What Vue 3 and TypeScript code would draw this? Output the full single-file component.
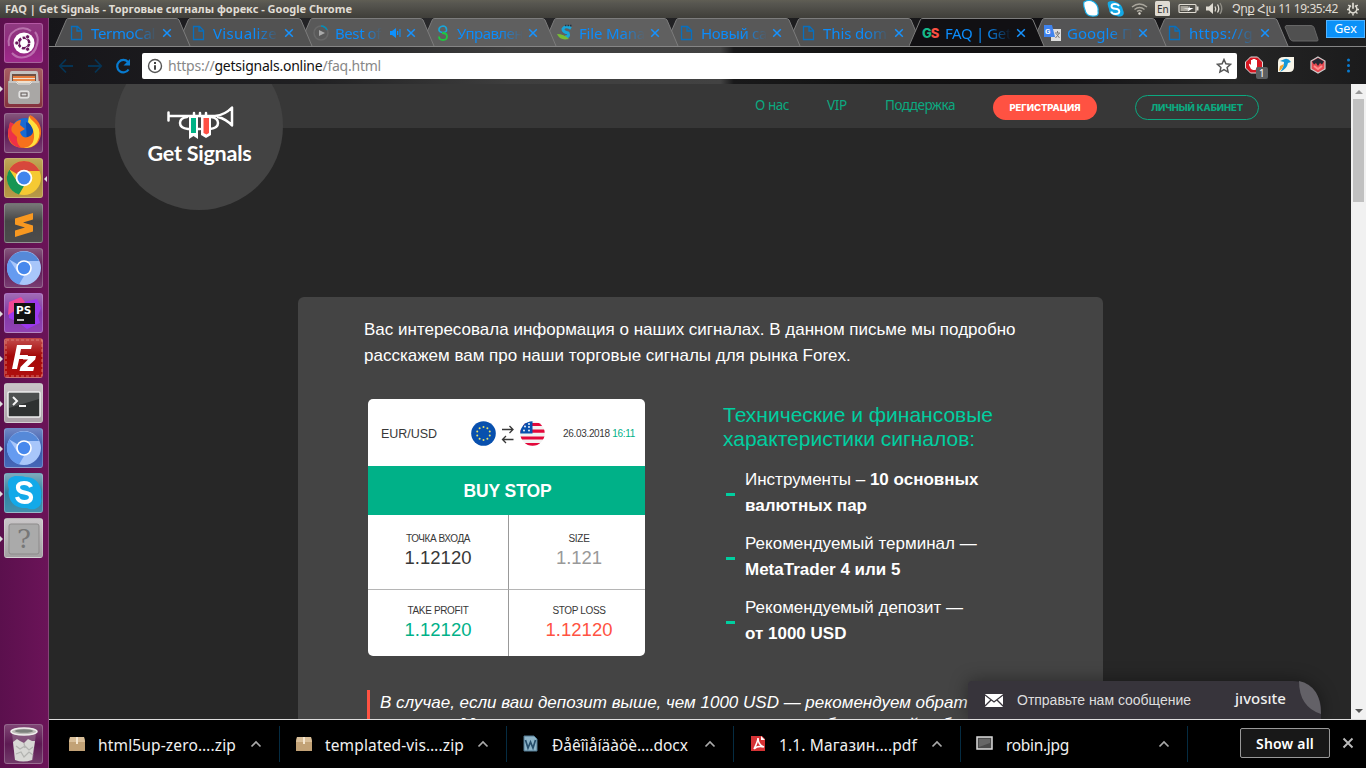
<script setup lang="ts">
import type { Directive } from 'vue'

interface Tab { title: string; icon: string; active?: boolean; audio?: boolean; shade: string }
interface Download { name: string; icon: string; width: number }
interface Tile { icon: string; bg: string; open?: boolean; focused?: boolean }

const tabs: Tab[] = [
  { title: 'TermoCal', icon: 'page', shade: '#4e4e4f' },
  { title: 'Visualize', icon: 'page', shade: '#525252' },
  { title: 'Best of', icon: 'play', audio: true, shade: '#595959' },
  { title: 'Управлен', icon: 'eight', shade: '#5f5f5f' },
  { title: 'File Mana', icon: 'swift', shade: '#606060' },
  { title: 'Новый са', icon: 'page', shade: '#585858' },
  { title: 'This dom', icon: 'page', shade: '#525252' },
  { title: 'FAQ | Get', icon: 'gs', active: true, shade: '#111013' },
  { title: 'Google П', icon: 'translate', shade: '#545455' },
  { title: 'https://g', icon: 'page', shade: '#545455' },
]

const tiles: Tile[] = [
  { icon: 'ubuntu', bg: 'linear-gradient(#8f3a80, #92277f 60%, #a02a8c)' },
  { icon: 'files', bg: 'linear-gradient(#a65d62, #84323e)', open: true },
  { icon: 'firefox', bg: 'linear-gradient(#84557b, #5c1a54 50%, #7a3d73)' },
  { icon: 'chrome', bg: 'linear-gradient(#c0a857, #a98b3b 50%, #b89a48)', open: true, focused: true },
  { icon: 'sublime', bg: 'linear-gradient(#777, #464646 45%, #4c4c4c)' },
  { icon: 'chromium', bg: 'linear-gradient(#84557b, #5c1a54 50%, #7a3d73)' },
  { icon: 'ps', bg: 'linear-gradient(#a06bb5, #8239a6 50%, #9142b3)', open: true },
  { icon: 'fz', bg: 'linear-gradient(#c24a4a, #a40808 45%, #b01010)', open: true },
  { icon: 'terminal', bg: 'linear-gradient(#c9c4c7, #aaa3a8)', open: true },
  { icon: 'chromium', bg: 'linear-gradient(#6f87c4, #3858a8 50%, #4668b8)', open: true },
  { icon: 'skype', bg: 'linear-gradient(#7fa9bb, #2f83a3 50%, #4490ac)', open: true },
  { icon: 'unknown', bg: 'linear-gradient(#c9c6c8, #a3a0a2)', open: true },
]

const downloads: Download[] = [
  { name: 'html5up-zero….zip', icon: 'box', width: 138 },
  { name: 'templated-vis….zip', icon: 'box', width: 139 },
  { name: 'Ðåêîìåíäàöè….docx', icon: 'word', width: 136 },
  { name: '1.1. Магазин….pdf', icon: 'pdf', width: 138 },
  { name: 'robin.jpg', icon: 'image', width: 63 },
]

const specs = [
  { lead: 'Инструменты –', strong: '10 основных валютных пар' },
  { lead: 'Рекомендуемый терминал —', strong: 'MetaTrader 4 или 5' },
  { lead: 'Рекомендуемый депозит —', strong: 'от 1000 USD' },
]

const stars = Array.from({ length: 10 }, (_, i) => {
  const a = (i * Math.PI) / 5
  return { x: 12.5 + 6.6 * Math.sin(a), y: 12.5 - 6.6 * Math.cos(a) }
})

/* Spreads a label's letters so that it fills the given width in pixels. */
const vFit: Directive<HTMLElement, number> = {
  mounted(el, { value }) {
    const n = (el.textContent ?? '').trim().length
    if (n > 0) el.style.letterSpacing = `${(value - el.getBoundingClientRect().width) / n}px`
  },
}

const tabWidths = [64, 64, 46, 66, 66, 66, 64, 66, 66, 64]
</script>

<template>
  <div class="desktop">
    <header class="panel">
      <span v-fit="347" class="panel-title">FAQ | Get Signals - Торговые сигналы форекс - Google Chrome</span>
      <svg class="tray" width="148" height="18" viewBox="0 0 148 18">
        <path d="M1 2q5-3 10 0q5 4 4 9q1 5-3 5q-9 1-10-6q-2-5-1-8z" fill="#fff" stroke="#19aee8" stroke-width="1.2" />
        <path d="M25 2q4-2 8 0q6 2 7 8q2 4-1 6q-3 1-5 0q-8-1-8-7q-2-5-1-7z" fill="#14a9e6" />
        <path d="M36 6q-1-2-4-2q-3.500 0-3.500 2.300t3.800 2.500t4 2.700t-3.800 2.500q-3.500 0-4.300-2.500" fill="none" stroke="#fff" stroke-width="1.900" />
        <g fill="none" stroke="#aaa79d" stroke-width="1.500"><path d="M49 7q7.500-6 15 0" /><path d="M51.500 9.500q5-4 10 0" /><path d="M54 11.500q2.500-2 5 0" /></g>
        <circle cx="56.500" cy="13.500" r="1.200" fill="#dfdbd2" />
        <rect x="72" y="1" width="15" height="15" rx="1.500" fill="#dfdbd2" />
        <text x="74" y="13" class="lang">En</text>
        <rect x="96" y="4.500" width="17" height="8" rx="1" fill="none" stroke="#dfdbd2" stroke-width="1.200" />
        <rect x="97.500" y="6" width="8" height="5" fill="#a5a299" /><rect x="113.500" y="6.500" width="2" height="4" fill="#dfdbd2" />
        <path d="M100 8.500h5l2-2.500-.5 2h4l-6 3.500 1-2z" fill="#fff" />
        <path d="M123 6.500h3l4-3.500v11l-4-3.500h-3z" fill="#dfdbd2" /><g fill="none" stroke="#dfdbd2" stroke-width="1.300"><path d="M132 6.500q1.500 2.500 0 5" /><path d="M134.500 4.500q2.500 4 0 8" /><path d="M137 3q3.500 5.500 0 11" stroke="#918f87" /></g>
      </svg>
      <span v-fit="106" class="clock">Չրք Հլս 11 19:35:42</span>
      <svg class="gear" width="14" height="14" viewBox="0 0 14 14"><g fill="none" stroke="#e0ddd4"><path d="M5 3.700a3.900 3.900 0 1 0 4 0" stroke-width="1.500" /><path d="M7 .8v6" stroke-width="1.700" /><path d="M2.300 3l1.500 1.200M1 7.500h2M2.500 11.500l1.400-1.200M7 13.500v-2M11.500 11.500l-1.400-1.200M13 7.500h-2M11.700 3l-1.500 1.200" stroke-width="1.500" /></g></svg>
    </header>

    <div class="work">
      <nav class="launcher">
        <div v-for="(t, i) in tiles" :key="i" class="tile" :class="{ open: t.open, focused: t.focused }" :style="{ background: t.bg }">
          <svg width="40" height="40" viewBox="0 0 40 40">
            <template v-if="t.icon === 'ubuntu'">
              <path d="M5 23C2 8 18 1 27 8M8 30c7 8 23 5 25-9M31 9c5 6 3 17-5 23" fill="none" stroke="#d49bca" stroke-width="2" opacity=".6" />
              <circle cx="20" cy="20" r="10.500" fill="#fff" /><circle cx="20" cy="20" r="5.200" fill="none" stroke="#6b185e" stroke-width="2.500" stroke-dasharray="9.400 1.490" stroke-dashoffset="-.7" />
              <g fill="#6b185e" stroke="#fff" stroke-width=".8"><circle cx="12.800" cy="20" r="2.100" /><circle cx="23.600" cy="13.800" r="2.100" /><circle cx="23.600" cy="26.200" r="2.100" /></g>
            </template>
            <template v-else-if="t.icon === 'files'">
              <path d="M6 5q0-2 2-2h24q2 0 2 2l1 12H5z" fill="#c4c2c0" /><rect x="8" y="6" width="24" height="11" fill="#6e5145" /><path d="M9 8h22v9H9z" fill="#e67b3c" /><path d="M9 10h22v5H9z" fill="#eee0cf" /><path d="M9 11h22v2H9z" fill="#e98747" />
              <path d="M4 13h8l2 2h12l2-2h8v21q0 2-2 2H6q-2 0-2-2z" fill="#a9a7a5" /><path d="M5 14h7l2 2h12l2-2h7" fill="none" stroke="#e5e2df" /><rect x="15" y="23" width="10" height="7" rx="1.500" fill="#d8d6d4" stroke="#eee" /><rect x="17" y="25" width="6" height="3" fill="#ddd" stroke="#605957" />
            </template>
            <template v-else-if="t.icon === 'firefox'">
              <circle cx="21" cy="19" r="14" fill="#196ad2" /><path d="M22 9l8 4 1 13-8 7z" fill="#0c4cb1" />
              <path d="M6 10l4 1q3-4 7-4l-1 5 5 4-5 3q2 7 8 5q6-2 5-8q0-6-4-10q0-3 1-4q12 6 11 19q-2 14-16 14Q3 35 4 19z" fill="#f6711d" /><path d="M25 3q1 3 5 6q7 6 5 15q-3 12-15 11q11-2 10-14q-1-7-6-12z" fill="#ffdf3e" /><path d="M4 19q1 14 13 16q-5-5-4-11l-5-5q-2-5 2-8L6 9z" fill="#ed3048" />
            </template>
            <template v-else-if="t.icon === 'chrome'">
              <circle cx="20" cy="20" r="17" fill="#f5c933" /><path d="M20 20L5.300 11.500A17 17 0 0 1 34.700 11.500L36 13H20z" fill="#d7483c" /><path d="M5.300 11.500L14 25l6 3-5 8.500A17 17 0 0 1 5.300 11.500z" fill="#179653" />
              <circle cx="20" cy="20" r="8.300" fill="#fff" /><circle cx="20" cy="20" r="6.500" fill="#4285ed" />
            </template>
            <template v-else-if="t.icon === 'sublime'">
              <path d="M11 15.500L29 10v6.500L19 19.500l10 3v6L11 34v-6.500l10-3-10-3z" fill="#f89820" />
            </template>
            <template v-else-if="t.icon === 'chromium'">
              <circle cx="20" cy="20" r="17" fill="#a8c6fa" /><path d="M20 20L5.300 11.500A17 17 0 0 1 35 13H20z" fill="#5689d8" /><path d="M5.300 11.500L14 25l6 3-5 8.500A17 17 0 0 1 5.300 11.500z" fill="#659bf0" />
              <circle cx="20" cy="20" r="7.800" fill="#fff" /><circle cx="20" cy="20" r="6.200" fill="#4688ed" />
            </template>
            <template v-else-if="t.icon === 'ps'">
              <path d="M5 9L17 4l3 5 13-3 4 9-3 8 2 7-13 6-9-7-9-4z" fill="#9c38ed" /><path d="M5 9L17 4l4 5-9 8-8 5z" fill="#ef4894" /><rect x="10" y="10" width="21" height="21" fill="#111" /><text x="12" y="21" class="ps-letters">PS</text><path d="M13 27h7" stroke="#fff" stroke-width="1.500" />
            </template>
            <template v-else-if="t.icon === 'fz'">
              <rect x="2" y="2" width="36" height="36" fill="none" stroke="#df8b82" stroke-width=".8" stroke-dasharray="3 2" />
              <path d="M13 7h15l-1 4H17l-1.200 6H24l-.8 4h-8L13 31H8z" fill="#fff" /><path d="M20 18h12l-.8 3.500-8 7.500h7l-1 4H15.500l1-4 7.500-7.500h-5z" fill="#fff" />
            </template>
            <template v-else-if="t.icon === 'terminal'">
              <rect x="4" y="9" width="32" height="25" rx="1" fill="#2e3131" stroke="#eee" stroke-width="1.500" /><path d="M5 10h30v6L5 25z" fill="#4d5050" /><path d="M9 14l4 4-4 4M15 23h7" fill="none" stroke="#f4f4f4" stroke-width="2" />
            </template>
            <template v-else-if="t.icon === 'skype'">
              <path d="M11 3q8 0 10 1q13 0 16 13q1 3 0 7q2 9-6 12q-5 1-8-1Q8 36 5 23q-1-3 0-7Q1 5 11 3z" fill="#12a9e9" /><path d="M27 14q-1.500-4-7-4q-6 0-6 4.500q0 4 6.500 5t6.500 4.800q0 4.700-6.500 4.700q-6 0-7.500-5" fill="none" stroke="#fff" stroke-width="4.200" />
            </template>
            <template v-else>
              <rect x="5" y="6" width="30" height="30" rx="2" fill="#aaa" stroke="#8d8b8b" /><text x="13" y="30" class="question">?</text>
            </template>
          </svg>
        </div>
        <div class="tile trash">
          <svg width="40" height="40" viewBox="0 0 40 40">
            <path d="M8 9h24l-3 27q-9 2-18 0z" fill="#a48ca0" opacity=".45" /><path d="M9 18l4-3 3 2 4 2 4-4 4 2 3 0-3 19q-9 3-17 0z" fill="#d8d8d5" /><path d="M12 22l4 3 5-3 4 4 4-3M12 30l5-2 3 5 5-5 4 3M20 19l1 5" fill="none" stroke="#b3b4b1" stroke-width="1.300" />
            <ellipse cx="20" cy="7.500" rx="13" ry="3.600" fill="#bcbcb7" stroke="#f0efed" stroke-width="1.500" /><ellipse cx="20" cy="7" rx="9" ry="1.700" fill="#7c817c" />
          </svg>
        </div>
      </nav>

      <main class="browser">
        <div class="tabstrip">
          <div v-for="(t, i) in tabs" :key="i" class="tab" :class="{ active: t.active }" :style="{ zIndex: t.active ? 20 : 10 - i }">
            <svg class="tab-shape" width="136" height="29" viewBox="0 0 136 29"><path d="M0 28L11.500 1.500Q12 .5 14 .5H121Q123 .5 124 2L135 28" :fill="t.shade" stroke="#7c7c7c" /></svg>
            <svg class="favicon" width="18" height="18" viewBox="0 0 18 18">
              <path v-if="t.icon === 'page'" d="M3.500 2.500h6l4 4v9h-10zM9 2.500v4.500h4.500" fill="none" stroke="#0870bf" stroke-width="1.300" />
              <template v-else-if="t.icon === 'play'"><circle cx="9" cy="9" r="7" fill="none" stroke="#686868" stroke-width="1.500" /><path d="M9 2a7 7 0 0 1 6 4" fill="none" stroke="#008eba" stroke-width="1.500" /><path d="M7 6l6 3-6 3z" fill="#aaa" /></template>
              <template v-else-if="t.icon === 'eight'"><path d="M12.500 7q-2 2-5 1.300T5 5t4-3q3 0 3.500 3z" fill="none" stroke="#1aa5d8" stroke-width="1.600" /><path d="M8 9q5 0 5 3.500q0 3.500-4 3.500t-4-3.500" fill="none" stroke="#1fc83e" stroke-width="1.800" /></template>
              <template v-else-if="t.icon === 'swift'"><path d="M15 4.500Q9 1 7 5q0 3 5 4q2 4-3 4" fill="none" stroke="#18a6db" stroke-width="3" /><path d="M1 10q2 5 8 5.500l4-.5q-5-5-12-5" fill="#77bd35" /><path d="M9 1.500h7" stroke="#234" stroke-width="1.500" stroke-dasharray="1.500 1" /></template>
              <text v-else-if="t.icon === 'gs'" x="0" y="13.500" class="gs"><tspan fill="#16b989">G</tspan><tspan fill="#fa5043">S</tspan></text>
              <template v-else><rect x="7" y="5" width="10" height="12" fill="#ddd" /><path d="M0 1h8l3 12H0z" fill="#3f83ee" /><text x="1" y="10" class="tiny-g">G</text><path d="M11 9h5m-2.500-2v2m-2 5l4-5m-3 1l3 4" stroke="#777" fill="none" /></template>
            </svg>
            <span class="tab-title" :class="{ short: t.audio }"><span v-fit="tabWidths[i]">{{ t.title }}</span></span>
            <svg v-if="t.audio" class="audio" width="11" height="10" viewBox="0 0 11 10"><path d="M0 3h2l4-3v10L2 7H0zM7 3h1.300v4H7zM9.500 1h1v8h-1z" fill="#0d91ff" /></svg>
            <svg class="tab-close" width="10" height="10" viewBox="0 0 10 10"><path d="M1.200 1.200l7.600 7.600M8.800 1.200L1.200 8.800" stroke="#1693ff" stroke-width="1.500" /></svg>
          </div>
          <svg class="newtab" width="36" height="18" viewBox="0 0 36 18"><path d="M2 .5h25q2 0 3 2l4 12q.3 1.500-1 1.500H9q-2 0-3-2L1 2z" fill="#505050" stroke="#666" /></svg>
          <div class="profile">Gex</div>
        </div>

        <div class="toolbar">
          <svg class="navs" width="80" height="20" viewBox="0 0 80 20">
            <path d="M13 10H0M6 3.500L-.2 10 6 16.500M28 10h13M35 3.500l6.200 6.500-6.200 6.500" fill="none" stroke="#063454" stroke-width="1.800" />
            <path d="M68 6A6.200 6.200 0 1 0 68.600 13.500" fill="none" stroke="#087bd0" stroke-width="2.200" /><path d="M70 3v6.500h-6.500z" fill="#087bd0" />
          </svg>
          <div class="address">
            <svg width="16" height="16" viewBox="0 0 16 16"><circle cx="8" cy="8" r="6.500" fill="none" stroke="#555" stroke-width="1.400" /><path d="M7 7.200h2v4.600H7zM7 4h2v2H7z" fill="#444" /></svg>
            <span v-fit="213" class="url">https://<b>getsignals.online</b>/faq.html</span>
            <svg class="star" width="16" height="16" viewBox="0 0 16 16"><path d="M8 1.500l1.900 4.300 4.700.5-3.500 3.100 1 4.700L8 11.700 3.900 14.100l1-4.700L1.400 6.300l4.700-.5z" fill="none" stroke="#555" stroke-width="1.500" /></svg>
          </div>
          <svg class="extensions" width="114" height="24" viewBox="0 0 114 24">
            <path d="M5.500 4h7l5 5v6l-5 5h-7l-5-5V9z" fill="#d71722" stroke="#ddd" stroke-width="1" transform="translate(0 -2)" /><path d="M6 14l-2-4q0-2 1-1l1 1V5h1.500v3-4H9v4-4h1.500v4-3H12v7l-1.500 3H8z" fill="#fff" />
            <rect x="11" y="12" width="12" height="12" rx="2" fill="#5c5f61" /><text x="14" y="22" class="badge">1</text>
            <path d="M33 7q0-5 6-5h10v10q0 5-5 5H33z" fill="#f8f5e9" /><path d="M46 7q-3-4-6-3l-5 2 4 1q0 5-4 10q7-3 8-9z" fill="#1598d9" /><path d="M39 9q-1 5-5 7l1-5z" fill="#f0a32c" />
            <path d="M73 2l7 4v8l-7 4-7-4V6z" fill="#e84951" stroke="#ccc" stroke-width="1.200" /><path d="M67 6.500l6-3.500 6 3.500-2 3-2-1.500-2 3-2-3-2 1.500z" fill="#242833" /><path d="M69 11l4 3 4-3" fill="none" stroke="#ff8e8c" stroke-width="2" />
            <circle cx="103.500" cy="5" r="1.500" fill="#087bd0" /><circle cx="103.500" cy="10.500" r="1.500" fill="#087bd0" /><circle cx="103.500" cy="16" r="1.500" fill="#087bd0" />
          </svg>
        </div>

        <section class="viewport">
          <div class="page">
            <div class="site-header">
              <a v-fit="34">О нас</a><a v-fit="20">VIP</a><a v-fit="70">Поддержка</a>
              <button class="register"><span v-fit="71">РЕГИСТРАЦИЯ</span></button>
              <button class="account"><span v-fit="92">ЛИЧНЫЙ КАБИНЕТ</span></button>
            </div>
            <div class="brand">
              <svg width="68" height="34" viewBox="0 0 68 34">
                <g fill="none" stroke="#fff" stroke-width="2.500" stroke-linecap="round" stroke-linejoin="round">
                  <path d="M1.500 6.500v8M2 10h46q10-1 17-8.500v18Q59 13 51 11" /><path d="M20 11q-7 1-7 6t8 6h2M44 11q7 1 7 6t-8 6h-2M27 7v3M33 7v3M39 7v3" /><path d="M31 23h2" />
                </g>
                <path d="M22 11h9v22l-4.500-3-4.500 3z" fill="#fff" /><path d="M24 12h5v15h-5z" fill="#00b386" />
                <path d="M34 11h10v18l-5 3-5-3z" fill="#fff" /><path d="M36.500 12h5.500v15l-2.500 1.500-3-1.500z" fill="#ff5044" />
              </svg>
              <span v-fit="104">Get Signals</span>
            </div>

            <article class="card">
              <p class="intro">Вас интересовала информация о наших сигналах. В данном письме мы подробно<br>расскажем вам про наши торговые сигналы для рынка Forex.</p>
              <div class="columns">
                <div class="signal">
                  <div class="signal-head">
                    <span v-fit="56" class="pair">EUR/USD</span>
                    <svg class="flags" width="76" height="26" viewBox="0 0 76 26">
                      <circle cx="12.500" cy="12.500" r="12.300" fill="#0850ae" /><circle v-for="(s, i) in stars" :key="i" :cx="s.x" :cy="s.y" r="1" fill="#e6e46b" />
                      <path d="M31 8.500h11M38.500 5l3.500 3.500-3.500 3.500M42.500 18.500h-11M35 15l-3.500 3.500L35 22" fill="none" stroke="#383838" stroke-width="1.300" />
                      <defs><clipPath id="disc"><circle cx="61.500" cy="12.500" r="12.200" /></clipPath></defs>
                      <g clip-path="url(#disc)"><rect x="49" width="26" height="26" fill="#f2f2f2" /><path d="M49 3.500h26M49 10.200h26M49 17h26M49 23.500h26" stroke="#e3083b" stroke-width="3.200" /><rect x="49" width="12.500" height="12.500" fill="#0850ae" /><g fill="#fff"><circle cx="54" cy="5.500" r=".9" /><circle cx="58" cy="3" r=".9" /><circle cx="53" cy="9.500" r=".9" /><circle cx="58" cy="9.500" r=".9" /><circle cx="58" cy="6" r=".9" /></g></g>
                    </svg>
                    <span v-fit="72" class="date">26.03.2018 <i>16:11</i></span>
                  </div>
                  <div class="signal-type"><span v-fit="88">BUY STOP</span></div>
                  <div class="grid">
                    <div><small v-fit="64">ТОЧКА ВХОДА</small><span v-fit="67">1.12120</span></div>
                    <div class="grey"><small v-fit="21">SIZE</small><span v-fit="46">1.121</span></div>
                    <div class="green"><small v-fit="61">TAKE PROFIT</small><span v-fit="67">1.12120</span></div>
                    <div class="red"><small v-fit="53">STOP LOSS</small><span v-fit="67">1.12120</span></div>
                  </div>
                </div>
                <div class="details">
                  <h2>Технические и финансовые характеристики сигналов:</h2>
                  <ul><li v-for="s in specs" :key="s.lead">{{ s.lead }} <strong>{{ s.strong }}</strong></li></ul>
                </div>
              </div>
              <blockquote>В случае, если ваш депозит выше, чем 1000 USD — рекомендуем обратиться<br>в нашу поддержку, наши специалисты помогут вам выбрать свой набор для вас.</blockquote>
            </article>

            <aside class="chat">
              <svg width="18" height="13" viewBox="0 0 18 13"><rect width="18" height="13" rx="1" fill="#fff" /><path d="M0 1l9 7 9-7M0 12l6-6M18 12l-6-6" fill="none" stroke="#37343b" stroke-width="1.300" /></svg>
              <span v-fit="174" class="chat-label">Отправьте нам сообщение</span>
              <span v-fit="51" class="jivo">jıvosıte</span>
              <svg class="leaf" width="22" height="33" viewBox="0 0 22 33"><path d="M0 0Q22 5 22 33Q0 26 0 0z" fill="#636167" /></svg>
            </aside>
          </div>
          <div class="scrollbar"><i class="up"></i><div class="thumb"></div><i class="down"></i></div>
        </section>

        <footer class="shelf">
          <div v-for="d in downloads" :key="d.name" class="download">
            <svg width="18" height="18" viewBox="0 0 18 18">
              <template v-if="d.icon === 'box'"><path d="M2 2h14l1 4v10H1V6z" fill="#c2a276" /><path d="M2 2h14l1 5H1z" fill="#d9bf99" /><path d="M9 2v7" stroke="#f4e6cf" stroke-width="2" /></template>
              <template v-else-if="d.icon === 'word'"><path d="M2 1h10l3 3v12H2z" fill="#8eb5c9" stroke="#507991" /><path d="M3.500 5l2.500 8 2.500-6L11 13l2.500-8" fill="none" stroke="#274e6b" stroke-width="1.700" /></template>
              <template v-else-if="d.icon === 'pdf'"><path d="M2 1h11l3 3v12H2z" fill="#d53335" /><path d="M5 14q4-8 4-11q0 7 6 9q-6-2-10 2" fill="none" stroke="#fff" stroke-width="1.600" /><path d="M12 1v4h4z" fill="#fff" /></template>
              <template v-else><rect x="1" y="2" width="15" height="12" fill="#4a4a4a" stroke="#ddd" stroke-width="1.500" /><path d="M3 4h11v4L3 12z" fill="#666" /></template>
            </svg>
            <span v-fit="d.width" class="filename">{{ d.name }}</span>
            <svg class="caret" width="12" height="8" viewBox="0 0 12 8"><path d="M1.500 6.500L6 2l4.500 4.500" fill="none" stroke="#aaa" stroke-width="1.700" /></svg>
          </div>
          <button class="show-all"><span v-fit="58">Show all</span></button>
          <svg class="dismiss" width="12" height="12" viewBox="0 0 12 12"><path d="M1.500 1.500l9 9M10.500 1.500l-9 9" stroke="#bbb" stroke-width="1.900" /></svg>
        </footer>
      </main>
    </div>
  </div>
</template>

<style>
html, body { margin: 0; overflow: hidden; background: #000; }
</style>

<style scoped>
* { box-sizing: border-box; }
svg { flex: none; display: block; }
button { padding: 0; font: inherit; }
.desktop { width: 1366px; height: 768px; overflow: hidden; display: flex; flex-direction: column; font-family: "Noto Sans", "Open Sans", sans-serif; white-space: nowrap; }
.panel { height: 18px; flex: none; display: flex; align-items: center; padding-left: 5px; background: linear-gradient(#605e54, #575650 20%, #3f3e39); }
.panel-title { color: #e0ddd4; font-size: 11px; font-weight: 700; line-height: 18px; }
.tray { width: 148px; margin-left: auto; }
.lang { font: 10px "Noto Sans", sans-serif; fill: #333; }
.clock { margin-left: 1px; font: 12px/18px "Noto Sans", "DejaVu Sans", sans-serif; color: #e0ddd4; }
.gear { margin: 0 6px 0 8px; }

.work { height: 750px; display: flex; }
.launcher { width: 49px; flex: none; padding: 5px 0 0 4px; display: flex; flex-direction: column; gap: 5px; background: linear-gradient(90deg, #5b104d, #6b1358); border-right: 1px solid #854477; }
.tile { width: 39px; height: 40px; flex: none; position: relative; border-radius: 3px; border: 1px solid rgba(255, 255, 255, .22); }
.tile > svg { margin: -1px; }
.tile.open::before { content: ""; position: absolute; left: -5px; top: 17px; border: 3px solid transparent; border-left-color: #ddd; border-right: 0; }
.tile.focused::after { content: ""; position: absolute; right: -5px; top: 17px; border: 3px solid transparent; border-right-color: #ddd; border-left: 0; }
.trash { margin-top: auto; margin-bottom: 4px; background: linear-gradient(#7f4574, #5d1a53 50%, #713a69); }
.ps-letters { font: 700 10.5px "DejaVu Sans", sans-serif; fill: #fff; }
.question { font: 26px "DejaVu Serif", serif; fill: #777; }

.browser { width: 1317px; flex: none; display: flex; flex-direction: column; background: #000; }
.tabstrip { height: 29px; flex: none; display: flex; padding-left: 6px; position: relative; background: linear-gradient(90deg, #17161a, #29292b 30%, #1c1c1e 60%, #111013 75%, #202021); border-bottom: 1px solid #858585; }
.tab { width: 122px; height: 29px; flex: none; display: flex; align-items: center; position: relative; padding-left: 13px; }
.tab-shape { position: absolute; left: 0; top: 0; }
.favicon { position: relative; }
.tab-title { position: relative; width: 66px; margin-left: 5px; font-size: 15px; line-height: 28px; color: #0b8cfb; -webkit-mask-image: linear-gradient(90deg, #000 65%, transparent); mask-image: linear-gradient(90deg, #000 65%, transparent); }
.tab-title.short { width: 47px; }
.audio { position: relative; margin-left: 8px; }
.tab-close { position: relative; margin-left: 5px; }
.gs { font: 800 13px Inter, sans-serif; letter-spacing: -1px; }
.tiny-g { font: 700 8px Roboto, sans-serif; fill: #fff; }
.newtab { margin: 7px 0 0 9px; }
.profile { width: 39px; height: 18px; margin: 2px 0 0 6px; border: 1px solid #54b4ff; background: #0b91f8; color: #fff; font-size: 12.5px; line-height: 16px; text-align: center; }
.toolbar { height: 37px; flex: none; display: flex; align-items: center; padding-left: 11px; background: linear-gradient(90deg, #17161a, #202022 20%, #3e3e3e 35%, #424242 51%, #19191a 52%, #111 65%, #111013 75%, #252525 90%, #1b1b1c); }
.navs { margin-right: 2px; overflow: visible; }
.address { width: 1095px; height: 26px; display: flex; align-items: center; padding: 0 5px; background: #fff; border-radius: 2px; }
.url { margin-left: 5px; color: #888; font-size: 14px; }
.url b { color: #111; font-weight: 400; }
.star { margin-left: auto; }
.extensions { margin: 3px 0 0 8px; }
.badge { font: 10px "Noto Sans", sans-serif; fill: #fff; }

.viewport { height: 635px; flex: none; display: flex; }
.page { width: 1302px; height: 635px; flex: none; position: relative; overflow: hidden; background: #272727; }
.site-header { height: 44px; display: flex; align-items: center; padding: 3px 0 0 706px; background: #373737; color: #0ba980; font-size: 13.500px; }
.site-header a { flex: none; margin-right: 38px; position: relative; top: -3px; }
.site-header button { height: 25px; border-radius: 13px; font: 800 9.500px Inter, sans-serif; }
.register { width: 104px; margin-right: 38px; background: #ff5242; color: #fff; border: 0; }
.account { width: 124px; background: transparent; color: #0ba980; border: 1px solid #0ba980; }
.brand { position: absolute; left: 66px; top: -42px; width: 168px; height: 168px; padding: 64px 0 0 1px; border-radius: 50%; background: #434343; display: flex; flex-direction: column; align-items: center; color: #fff; }
.brand svg { position: relative; left: 1px; }
.brand span { margin-top: -1px; font: 700 21.500px/28px Lato, sans-serif; }
.card { width: 805px; height: 500px; margin: 169px 0 0 249px; padding: 20px 0 0 66px; border-radius: 6px; background: #444; color: #fff; font-family: "Liberation Sans", Arial, sans-serif; }
.intro { margin: 0; font-size: 17px; line-height: 26px; }
.columns { display: flex; margin: 30px 0 0 4px; }
.signal { width: 277px; height: 257px; overflow: hidden; border-radius: 5px; background: #fff; color: #383838; }
.signal-head { height: 67px; display: flex; align-items: center; padding: 2px 0 0 13px; }
.pair { font-size: 12.500px; }
.flags { margin-left: 34px; }
.date { margin-left: 16px; font-size: 10px; }
.date i { font-style: normal; color: #00b188; }
.signal-type { height: 49px; padding-left: 2px; text-align: center; line-height: 50px; color: #fff; background: #00b188; font-size: 17.500px; font-weight: 700; }
.grid { display: grid; grid-template-columns: 141px 136px; grid-template-rows: 75px 67px; }
.grid > div { display: flex; flex-direction: column; align-items: center; padding-top: 18px; border-bottom: 1px solid #b5b5b5; border-right: 1px solid #999; }
.grid > div:nth-child(n + 3) { border-bottom: 0; padding-top: 15px; }
.grid > div:nth-child(even) { border-right: 0; padding-left: 4px; }
.grid small { color: #383838; font-size: 10px; line-height: 12px; }
.grid span { font-size: 18.500px; line-height: 26px; }
.grey { color: #999; }
.green { color: #00b188; }
.red { color: #ff5242; }
.details { width: 290px; margin: 4px 0 0 78px; }
h2 { margin: 0; color: #00cfa0; font-size: 21px; line-height: 24px; font-weight: 400; white-space: normal; }
ul { margin: 16px 0 0; padding: 0; list-style: none; display: flex; flex-direction: column; gap: 12px; }
li { position: relative; width: 262px; padding-left: 22px; font-size: 17px; line-height: 26px; white-space: normal; }
li::before { content: ""; position: absolute; left: 3px; top: 26px; width: 9px; height: 3px; background: #00cfa0; }
blockquote { margin: 34px 0 0 3px; padding: 2px 0 0 10px; border-left: 3px solid #ff5242; font-size: 17px; font-style: italic; line-height: 22px; height: 60px; }
.chat { position: absolute; left: 919px; bottom: 0; width: 353px; height: 38px; display: flex; align-items: center; padding-left: 17px; border-radius: 4px 28px 0 0; background: #37343b; box-shadow: 0 0 18px rgba(0, 0, 0, .4); color: #ddd; }
.chat-label { margin-left: 14px; font: 14px "Liberation Sans", sans-serif; }
.jivo { margin-left: 44px; margin-top: -4px; font: 500 15px "Noto Sans", sans-serif; color: #eee; }
.leaf { position: absolute; right: 0; top: 0; }
.scrollbar { width: 15px; position: relative; display: flex; flex-direction: column; align-items: center; background: #f1f1f1; }
.scrollbar i { border: 4px solid transparent; }
.up { margin-top: 2px; border-bottom-color: #999 !important; }
.down { margin-top: auto; margin-bottom: 2px; border-top-color: #555 !important; }
.thumb { width: 11px; height: 103px; margin-top: 5px; background: #c1c1c1; }

.shelf { height: 49px; flex: none; display: flex; align-items: center; border-top: 1px solid #ddd; background: #000; color: #f1f1f1; }
.download { width: 227px; height: 36px; padding-left: 15px; display: flex; align-items: center; position: relative; border-right: 1px solid #052c42; }
.download:first-child { width: 231px; padding-left: 19px; }
.filename { margin-left: 12px; font-size: 15.500px; line-height: 34px; position: relative; top: 1px; }
.caret { position: absolute; right: 17px; top: 14px; }
.show-all { width: 90px; height: 30px; margin-left: 52px; margin-top: -2px; border: 1px solid #999; border-radius: 2px; background: #181818; color: #fff; font-size: 14px; font-weight: 600; }
.dismiss { margin-left: 12px; margin-top: -2px; }
</style>
